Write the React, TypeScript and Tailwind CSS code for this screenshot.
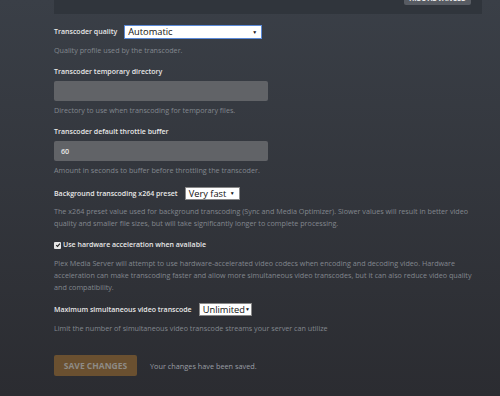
import { useState } from 'react';

const font = { fontFamily: '"Open Sans", "Noto Sans", sans-serif' };

function Select({ value, width, focused }: { value: string; width: string; focused?: boolean }) {
  return (
    <div
      className={`flex items-center justify-between bg-white pl-[3px] pr-[4px] text-[9.3px] leading-none text-[#111] ${width} ${
        focused ? 'h-[14px] border border-[#5b8ad8]' : 'h-[13px] border border-[#888]'
      }`}
    >
      <span>{value}</span>
      <span className="text-[5px]">▼</span>
    </div>
  );
}

export default function App() {
  const [hw, setHw] = useState(true);

  return (
    <div
      className="h-[396px] w-[500px] overflow-hidden bg-gradient-to-b from-[#3a3f47] to-[#2b2c31] px-[54px]"
      style={font}
    >
      {/* Advanced panel */}
      <div className="flex h-[14px] w-[428px] justify-end bg-[#30353c] pr-[11px]">
        <button className="mt-[-8px] h-[13px] w-[67px] rounded-[2px] bg-[#585c63] text-[7px] font-bold uppercase leading-[12px] text-[#e6e6e6]">
          Hide Advanced
        </button>
      </div>

      <div className="w-[424px] text-[7.2px] leading-[12px]">
        {/* Transcoder quality */}
        <div className="mt-[11px] flex items-center gap-[7px]">
          <span className="text-[7px] font-semibold text-[#e8e8e8]">Transcoder quality</span>
          <Select value="Automatic" width="w-[138px]" focused />
        </div>
        <p className="mt-[5px] text-[#82878e]">Quality profile used by the transcoder.</p>

        {/* Temp directory */}
        <p className="mt-[10px] text-[7px] font-semibold text-[#e8e8e8]">Transcoder temporary directory</p>
        <div className="mt-[3px] h-[20px] w-[214px] rounded-[2px] bg-[#616367]" />
        <p className="mt-[3px] text-[#82878e]">Directory to use when transcoding for temporary files.</p>

        {/* Throttle buffer */}
        <p className="mt-[10px] text-[7px] font-semibold text-[#e8e8e8]">Transcoder default throttle buffer</p>
        <div className="mt-[3px] flex h-[20px] w-[214px] items-center rounded-[2px] bg-[#616367] pl-[7px] font-semibold text-[#e8e8e8]">
          60
        </div>
        <p className="mt-[3px] text-[#82878e]">Amount in seconds to buffer before throttling the transcoder.</p>

        {/* x264 preset */}
        <div className="mt-[11px] flex items-center gap-[7px]">
          <span className="text-[7px] font-semibold text-[#e8e8e8]">Background transcoding x264 preset</span>
          <Select value="Very fast" width="w-[55px]" />
        </div>
        <p className="mt-[5px] text-[#82878e]">
          The x264 preset value used for background transcoding (Sync and Media Optimizer). Slower values will result in
          better video quality and smaller file sizes, but will take significantly longer to complete processing.
        </p>

        {/* Hardware acceleration */}
        <label className="mt-[10px] flex items-center gap-[2px] text-[7px] font-semibold text-[#e8e8e8]">
          <span
            onClick={() => setHw(!hw)}
            className="flex h-[7px] w-[7px] items-center justify-center rounded-[1px] bg-[#e6e6e6]"
          >
            {hw && (
              <svg viewBox="0 0 10 10" className="h-[6px] w-[6px]">
                <path d="M2 5.2 L4.2 7.4 L8.2 2.6" fill="none" stroke="#222" strokeWidth="1.8" />
              </svg>
            )}
          </span>
          Use hardware acceleration when available
        </label>
        <p className="mt-[6px] text-[#82878e]">
          Plex Media Server will attempt to use hardware-accelerated video codecs when encoding and decoding video.
          Hardware acceleration can make transcoding faster and allow more simultaneous video transcodes, but it can also
          reduce video quality and compatibility.
        </p>

        {/* Max simultaneous */}
        <div className="mt-[10px] flex items-center gap-[7px]">
          <span className="text-[7px] font-semibold text-[#e8e8e8]">Maximum simultaneous video transcode</span>
          <Select value="Unlimited" width="w-[53px]" />
        </div>
        <p className="mt-[6px] text-[#82878e]">Limit the number of simultaneous video transcode streams your server can utilize</p>

        {/* Save */}
        <div className="mt-[21px] flex items-center gap-[13px]">
          <button className="h-[21px] w-[83px] rounded-[2px] bg-[#6a5030] text-[8.5px] font-bold uppercase text-[#8e8b86]">
            Save Changes
          </button>
          <span className="text-[7.3px] text-[#9a9ea5]">Your changes have been saved.</span>
        </div>
      </div>
    </div>
  );
}
